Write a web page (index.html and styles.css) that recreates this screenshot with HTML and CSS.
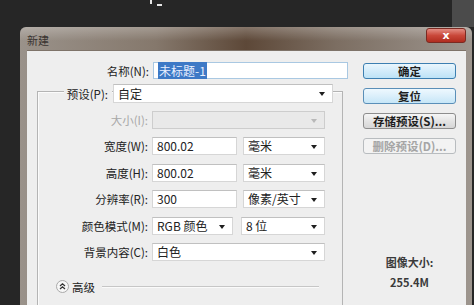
FILE: index.html
```html
<!DOCTYPE html>
<html lang="zh-CN">
<head>
  <meta charset="UTF-8">
  <title>新建</title>
  <link rel="stylesheet" href="styles.css">
</head>
<body>
  <div class="topbar">
    <span class="mark"><i class="tick"></i><i class="dash"></i></span>
    <span class="corner"></span>
  </div>

  <div class="dialog">
    <div class="titlebar">
      <span class="title">新建</span>
      <button class="close">x</button>
    </div>

    <div class="body">
      <div class="main">
        <div class="name-row">
          <label>名称(N):</label>
          <div class="input name"><span class="sel">未标题-1</span></div>
        </div>

        <div class="group">
          <div class="preset-row">
            <label class="legend">预设(P):</label>
            <div class="select preset">自定</div>
          </div>

          <div class="rows">
            <label class="dim">大小(I):</label>
            <div class="select disabled"></div>

            <label>宽度(W):</label>
            <div class="pair">
              <div class="input w85">800.02</div>
              <div class="select w82">毫米</div>
            </div>

            <label>高度(H):</label>
            <div class="pair">
              <div class="input w85">800.02</div>
              <div class="select w82">毫米</div>
            </div>

            <label>分辨率(R):</label>
            <div class="pair">
              <div class="input w85">300</div>
              <div class="select w82">像素/英寸</div>
            </div>

            <label>颜色模式(M):</label>
            <div class="pair wide-gap">
              <div class="select w81">RGB 颜色</div>
              <div class="select w84">8 位</div>
            </div>

            <label>背景内容(C):</label>
            <div class="select">白色</div>
          </div>

          <div class="advanced">
            <svg class="adv-icon" width="13" height="13" viewBox="0 0 13 13">
              <circle cx="6.5" cy="6.5" r="6" fill="#f7f7f7" stroke="#a9a9a9"/>
              <path d="M4 6 L6.5 3.8 L9 6 M4 9 L6.5 6.8 L9 9" fill="none" stroke="#333" stroke-width="1.3"/>
            </svg>
            <span>高级</span>
            <span class="rule"></span>
          </div>
        </div>
      </div>

      <div class="side">
        <button class="btn default">确定</button>
        <button class="btn blue">复位</button>
        <button class="btn">存储预设(S)...</button>
        <button class="btn off">删除预设(D)...</button>
        <div class="size">图像大小:<br>255.4M</div>
      </div>
    </div>
  </div>
</body>
</html>
```

FILE: styles.css
```css
body {
  margin: 0;
  width: 474px;
  height: 305px;
  overflow: hidden;
  background-color: #262626;
  font-family: "Noto Sans CJK SC", "Noto Sans", sans-serif;
  font-size: 11.5px;
  color: #222;
}
.topbar {
  display: flex;
  height: 27px;
}
.mark {
  display: flex;
  align-items: flex-start;
  gap: 5px;
  margin-left: 150px;
}
.tick {
  width: 2px;
  height: 4px;
  background-color: #e6e6e6;
}
.dash {
  margin-top: 4px;
  width: 5px;
  height: 2px;
  background-color: #e6e6e6;
}
.corner {
  margin-left: auto;
  width: 22px;
  background-color: #4b4b4b;
}
.dialog {
  margin-left: 20px;
  width: 452px;
  height: 278px;
  border-radius: 6px 6px 0 0;
  background: linear-gradient(to right, #9a928a 0%, #85786c 30%, #5d4838 50%, #7c6e62 70%, #9d958e 100%);
  overflow: hidden;
}
.titlebar {
  display: flex;
  height: 23px;
  background: linear-gradient(to bottom, rgba(255,255,255,0.25), rgba(255,255,255,0) 60%);
}
.title {
  padding-left: 7px;
  padding-top: 3px;
  line-height: 20px;
  font-size: 11px;
  color: #3a3431;
}
.close {
  margin: 1px 6px 0 auto;
  width: 40px;
  height: 15px;
  padding: 0;
  border: 1px solid #7a2a22;
  border-radius: 3px;
  background: linear-gradient(to bottom, #e48d83, #c9483a 50%, #b02c1f);
  color: #fff;
  font-family: "DejaVu Sans", sans-serif;
  font-weight: bold;
  font-size: 11px;
  line-height: 12px;
}
.body {
  display: flex;
  margin: 0 6px 0 7px;
  height: 255px;
  box-sizing: border-box;
  padding-top: 11px;
  background-color: #eeeeee;
  border-top: 1px solid #7e7369;
}
.main {
  width: 321px;
  padding-left: 10px;
  box-sizing: border-box;
}
.name-row {
  display: flex;
  align-items: center;
  gap: 4px;
  height: 17px;
}
.name-row label {
  width: 112px;
  text-align: right;
}
.input, .select {
  position: relative;
  box-sizing: border-box;
  height: 18px;
  line-height: 16px;
  padding-left: 4px;
  background-color: #fff;
  border: 1px solid #d6d6d6;
  border-top-color: #c0c0c0;
  font-size: 12px;
  white-space: nowrap;
}
.input.name {
  width: 195px;
  height: 17px;
  line-height: 15px;
  border-color: #a9c8e2;
}
.sel {
  background-color: #3d79c6;
  color: #e9f0ff;
  padding: 0 1px;
}
.select::after {
  content: "";
  position: absolute;
  right: 7px;
  top: 7px;
  border-left: 3px solid transparent;
  border-right: 3px solid transparent;
  border-top: 4px solid #1e1e1e;
}
.select.disabled {
  background-color: #e9e9e9;
  border-color: #cdcdcd;
}
.select.disabled::after {
  border-top-color: #b8b8b8;
}
.group {
  margin-top: 12px;
  width: 306px;
  height: 240px;
  box-sizing: border-box;
  border: 1px solid #b4b4b4;
  border-bottom: none;
  box-shadow: inset 1px 1px 0 #fbfbfb;
}
.preset-row {
  display: flex;
  align-items: center;
  margin-top: -8px;
  margin-left: 26px;
  height: 19px;
}
.legend {
  width: 48px;
  box-sizing: border-box;
  padding-right: 4px;
  text-align: right;
  background-color: #eeeeee;
}
.select.preset {
  margin-left: 1px;
  width: 220px;
  height: 19px;
  line-height: 17px;
}
.rows {
  display: grid;
  grid-template-columns: 110px 173px;
  column-gap: 4px;
  row-gap: 8.4px;
  margin-top: 8px;
}
.rows label {
  text-align: right;
  line-height: 18px;
}
.rows label.dim {
  color: #a8a8a8;
}
.pair {
  display: flex;
  gap: 6px;
}
.pair.wide-gap {
  gap: 8px;
}
.w85 { width: 85px; }
.w82 { width: 82px; }
.w81 { width: 81px; }
.w84 { width: 84px; }
.advanced {
  display: flex;
  align-items: center;
  height: 16px;
  margin-top: 18px;
  padding-left: 18px;
  gap: 3px;
}
.rule {
  margin-left: 4px;
  width: 217px;
  height: 1px;
  background-color: #c6c6c6;
  box-shadow: 0 1px 0 #fafafa;
}
.side {
  width: 93px;
  margin-left: 15px;
  padding-top: 1px;
  display: flex;
  flex-direction: column;
}
.btn {
  height: 16px;
  margin-bottom: 9px;
  padding: 0;
  border: 1px solid #8d8d8d;
  border-radius: 3px;
  background: linear-gradient(to bottom, #f6f6f6, #e4e4e4 50%, #d6d6d6);
  font-family: "Noto Sans CJK SC", sans-serif;
  font-size: 11.5px;
  line-height: 13px;
  color: #1e1e1e;
  font-weight: bold;
}
.btn.default {
  border-color: #3c7fb1;
  background: linear-gradient(to bottom, #eaf6fd, #d3ecfa 50%, #bde2f6);
}
.btn.blue {
  border-color: #5a8fb8;
  background: linear-gradient(to bottom, #eef8fe, #dbeffb 50%, #c6e6f7);
}
.btn.off {
  border-color: #b8bcbf;
  background: #f3f3f3;
  color: #a5a5a5;
}
.size {
  margin-top: 89px;
  text-align: center;
  line-height: 20px;
  font-size: 11px;
  font-weight: bold;
  color: #3a3a3a;
}
```
